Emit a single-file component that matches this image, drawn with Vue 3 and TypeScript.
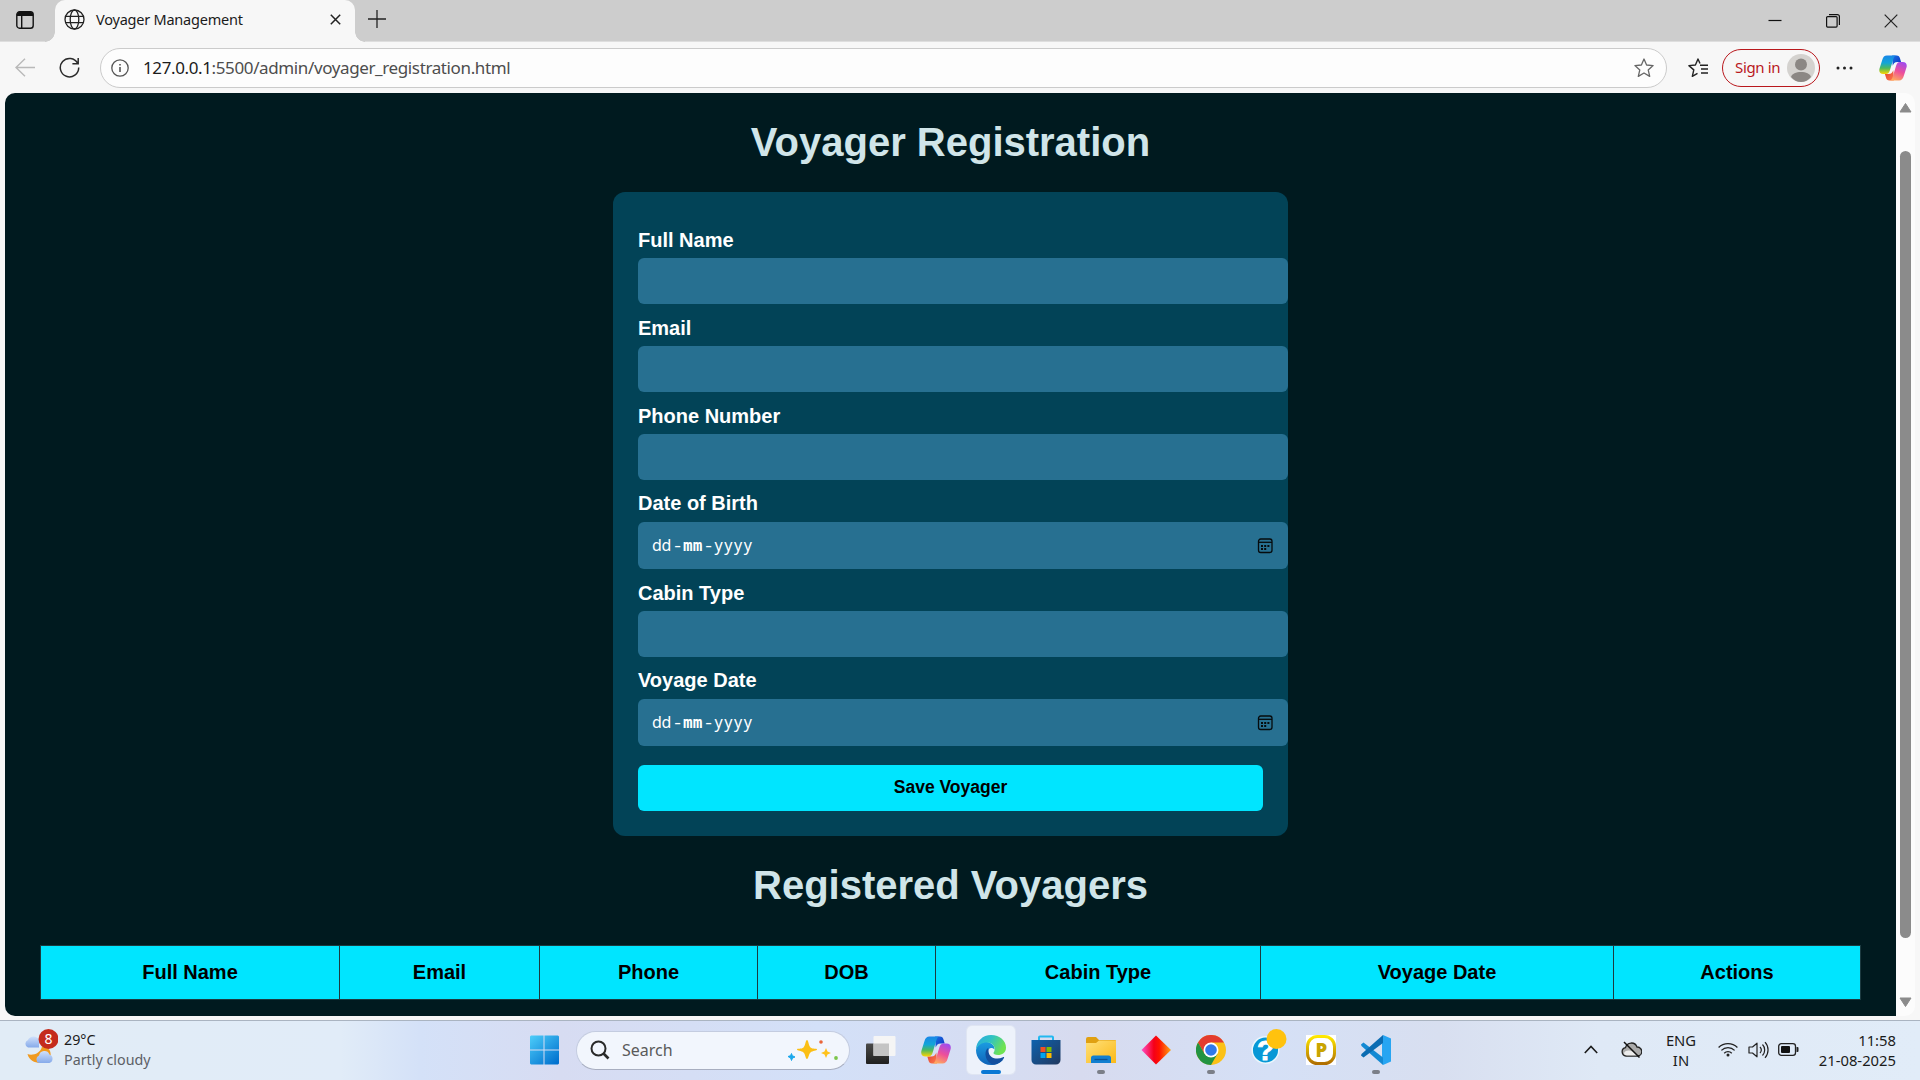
<script setup lang="ts">
interface Field { label: string; date?: boolean }
const fields: Field[] = [
  { label: 'Full Name' },
  { label: 'Email' },
  { label: 'Phone Number' },
  { label: 'Date of Birth', date: true },
  { label: 'Cabin Type' },
  { label: 'Voyage Date', date: true },
]
const columns: { name: string; width: number }[] = [
  { name: 'Full Name', width: 299 },
  { name: 'Email', width: 200 },
  { name: 'Phone', width: 218 },
  { name: 'DOB', width: 178 },
  { name: 'Cabin Type', width: 325 },
  { name: 'Voyage Date', width: 353 },
  { name: 'Actions', width: 247 },
]
</script>

<template>
  <div class="desktop">
    <svg width="0" height="0" class="defs">
      <defs>
        <linearGradient id="cpA" x1="0" y1="0" x2="0" y2="1"><stop offset="0" stop-color="#1a86e8" /><stop offset=".4" stop-color="#12a5d8" /><stop offset=".68" stop-color="#4cb95f" /><stop offset="1" stop-color="#ffd400" /></linearGradient>
        <linearGradient id="cpB" x1=".7" y1="0" x2=".3" y2="1"><stop offset="0" stop-color="#a14bec" /><stop offset=".5" stop-color="#ee4f9a" /><stop offset="1" stop-color="#ffab5c" /></linearGradient>
        <linearGradient id="cpC" x1="0" y1="0" x2="1" y2="1"><stop offset="0" stop-color="#1a72e0" /><stop offset="1" stop-color="#0a2fc4" /></linearGradient>
        <linearGradient id="cpD" x1="0" y1="0" x2="1" y2="1"><stop offset="0" stop-color="#e0402f" /><stop offset="1" stop-color="#ff7a50" /></linearGradient>
        <symbol id="copilot" viewBox="0 0 30 28">
          <path fill="url(#cpC)" d="M14 0.5h5c2 0 3 1.200 3.500 3l1.200 4h-4c-3 0-4 1.500-5 4z" />
          <path fill="url(#cpD)" d="M16 27.500h-5c-2 0-3-1.200-3.500-3l-1.200-4h4c3 0 4-1.500 5-4z" />
          <path fill="url(#cpA)" d="M8.500 0.500H19c-2 0-3 1.500-3.700 4L11.500 17c-.7 2.200-2 3.500-4 3.500H4.500C1 20.500-.5 18 .5 14.500L3.500 5C4.300 2.200 5.800.5 8.500.5z" />
          <path fill="url(#cpB)" d="M21.500 27.500H11c2 0 3-1.500 3.700-4L18.500 11c.7-2.200 2-3.500 4-3.500h3c3.500 0 5 2.500 4 6L26.500 23c-.8 2.800-2.300 4.500-5 4.500z" />
        </symbol>
      </defs>
    </svg>

    <header class="tabbar">
      <div class="workspace">
        <svg width="18" height="18" viewBox="0 0 18 18"><rect x=".8" y=".8" width="16.400" height="16.400" rx="2.800" fill="none" stroke="#111" stroke-width="1.400" /><path d="M1 5V3.500A2.500 2.500 0 0 1 3.500 1h11A2.500 2.500 0 0 1 17 3.500V5zM5 5h1.400v12H5z" fill="#111" /></svg>
      </div>
      <div class="tab">
        <svg width="21" height="21" viewBox="0 0 21 21" fill="none" stroke="#222" stroke-width="1.300"><circle cx="10.500" cy="10.500" r="9.500" /><ellipse cx="10.500" cy="10.500" rx="4.300" ry="9.500" /><path d="M2 7.300h17M2 13.700h17" /></svg>
        <span class="tab-title">Voyager Management</span>
        <svg class="tab-x" width="11" height="11" viewBox="0 0 11 11"><path d="M.8.8l9.400 9.400M10.200.8L.8 10.200" stroke="#222" stroke-width="1.500" /></svg>
      </div>
      <svg class="plus" width="18" height="18" viewBox="0 0 18 18"><path d="M9 0v18M0 9h18" stroke="#222" stroke-width="1.300" /></svg>
      <div class="window-controls">
        <svg width="14" height="14" viewBox="0 0 14 14"><path d="M.5 6.500h13" stroke="#111" stroke-width="1.200" /></svg>
        <svg width="14" height="14" viewBox="0 0 14 14" fill="none" stroke="#111" stroke-width="1.200"><rect x=".6" y="2.600" width="10.500" height="10.500" rx="1" /><path d="M3 .6h8.400a2 2 0 0 1 2 2V11" /></svg>
        <svg width="14" height="14" viewBox="0 0 14 14"><path d="M.7.7l12.600 12.600M13.300.7L.7 13.300" stroke="#222" stroke-width="1.200" /></svg>
      </div>
    </header>

    <div class="toolbar">
      <svg class="back" width="20" height="19" viewBox="0 0 20 19" fill="none" stroke="#b9b9b9" stroke-width="1.400"><path d="M20 9.500H1M10 .8L1 9.500l9 8.700" /></svg>
      <svg class="reload" width="21" height="21" viewBox="0 0 21 21" fill="none" stroke="#2b2b2b" stroke-width="1.500"><path d="M18.700 6.500A9.200 9.200 0 1 0 19.700 10.500M19.200 1v5.800h-5.800" /></svg>
      <div class="address">
        <svg width="18" height="18" viewBox="0 0 18 18" fill="none" stroke="#555" stroke-width="1.300"><circle cx="9" cy="9" r="8.200" /><path d="M9 8v5M9 5v1.600" stroke-width="1.600" /></svg>
        <span class="url"><b>127.0.0.1</b>:5500/admin/voyager_registration.html</span>
        <svg class="star" width="20" height="20" viewBox="0 0 20 20" fill="none" stroke="#666" stroke-width="1.300" stroke-linejoin="round"><path d="M10 1l2.600 6 6.500.6-4.900 4.300 1.500 6.500L10 15l-5.700 3.400 1.500-6.500L.9 7.600 7.400 7z" /></svg>
      </div>
      <svg class="favs" width="20" height="20" viewBox="0 0 20 20" fill="none" stroke="#222" stroke-width="1.400" stroke-linejoin="round"><path d="M12 5.500L10 1 7.400 7 .9 7.600l4.900 4.300-1.500 6.500L9.500 15.300M12 7.200h8M13 11h7M13 15h7" /></svg>
      <div class="signin">
        <span>Sign in</span>
        <svg width="28" height="28" viewBox="0 0 28 28"><circle cx="14" cy="14" r="14" fill="#d4d2cf" /><circle cx="14" cy="10.500" r="6" fill="#8b8784" /><path d="M4 23c1-3.500 5-5 10-5s9 1.500 10 5c-2.500 3-6 5-10 5s-7.500-2-10-5z" fill="#8b8784" /></svg>
      </div>
      <svg class="dots" width="17" height="4" viewBox="0 0 17 4" fill="#222"><circle cx="2" cy="2" r="1.500" /><circle cx="8.500" cy="2" r="1.500" /><circle cx="15" cy="2" r="1.500" /></svg>
      <svg class="copilot-bar" width="28" height="26"><use href="#copilot" /></svg>
    </div>

    <div class="viewport">
      <main class="page">
        <h1>Voyager Registration</h1>
        <form class="form" @submit.prevent>
          <template v-for="f in fields" :key="f.label">
            <label :class="{ date: f.date }">{{ f.label }}</label>
            <div class="input" :class="{ date: f.date }">
              <template v-if="f.date">
                <span class="date-text"><i class="dd">dd</i><i class="sep">-</i><i class="mm">mm</i><i class="sep">-</i><i class="yy">yyyy</i></span>
                <svg width="16" height="16" viewBox="0 0 16 16" fill="none" stroke="#060b0d" stroke-width="1.300"><rect x="1.500" y="1" width="13.500" height="13.500" rx="2.200" /><path d="M1.500 4.300h13.500" /><path d="M4 8h2M7.200 8h2M10.400 8h2M4 11h2M7.200 11h2" stroke-width="2" /></svg>
              </template>
            </div>
          </template>
          <button type="submit">Save Voyager</button>
        </form>
        <h1 class="second">Registered Voyagers</h1>
        <div class="table">
          <div v-for="c in columns" :key="c.name" class="th" :style="{ width: c.width + 'px' }">{{ c.name }}</div>
        </div>
      </main>
      <div class="scrollbar">
        <svg width="13" height="10" viewBox="0 0 13 10"><path d="M6.500.5L12 9H1z" fill="#8b8b8b" stroke="#8b8b8b" stroke-linejoin="round" /></svg>
        <div class="thumb"></div>
        <svg width="13" height="10" viewBox="0 0 13 10"><path d="M6.500 9.500L12 1H1z" fill="#8b8b8b" stroke="#8b8b8b" stroke-linejoin="round" /></svg>
      </div>
    </div>

    <footer class="taskbar">
      <div class="weather">
        <svg class="weather-icon" width="34" height="36" viewBox="0 0 34 36">
          <defs><linearGradient id="cl" x1="0" y1="0" x2="0" y2="1"><stop offset="0" stop-color="#cfe0fb" /><stop offset="1" stop-color="#86aaea" /></linearGradient></defs>
          <path d="M4 18.500a4 4 0 0 1 0-7.500 6 6 0 0 1 11 0v7.500z" fill="url(#cl)" />
          <path d="M3.500 25c4 2 13 0 14.500-7.500 6 0 9.500 4 8.500 9.500-2 9-20 10-23-2z" fill="#f09a20" />
          <path d="M15 34a4 4 0 0 1 0-7.500 5.500 5.500 0 0 1 10.500-1 4.500 4.500 0 0 1 0 8.500z" fill="url(#cl)" />
          <circle cx="24.500" cy="10" r="10" fill="#c42b1c" />
          <text x="24.500" y="15" text-anchor="middle" font-size="14" fill="#fff">8</text>
        </svg>
        <div class="two-line"><span>29°C</span><span class="muted">Partly cloudy</span></div>
      </div>

      <div class="apps">
        <svg class="app" width="30" height="30" viewBox="0 0 30 30">
          <defs><linearGradient id="win" gradientUnits="userSpaceOnUse" x1="0" y1="0" x2="26" y2="30"><stop offset="0" stop-color="#4fd0fb" /><stop offset="1" stop-color="#0070ce" /></linearGradient></defs>
          <path fill="url(#win)" d="M2 .5h12.500v14H1v-13zM15.500.5h13.500l1 1v13H15.500zM1 15.500h13.500v14H2l-1-1zM15.500 15.500H30v13l-1 1H15.500z" />
        </svg>
        <div class="search">
          <svg width="20" height="20" viewBox="0 0 20 20" fill="none" stroke="#2a2a2a" stroke-width="2"><circle cx="8.500" cy="8.500" r="7" /><path d="M13.500 13.500l5 5" stroke-width="2.600" /></svg>
          <span>Search</span>
          <svg class="sparkle" width="52" height="22" viewBox="0 0 52 22">
            <path d="M20 1c1.500 0 1.500 5.500 3.500 7.500S30 9 30 10.500s-4.500 1-6.500 3S21.500 20 20 20s-1.500-4.500-3.500-6.500-6.500-1.500-6.500-3 4.500 0 6.500-2S18.500 1 20 1z" fill="#fbbf16" />
            <path d="M39 9l1.500 3.500L44 14l-3.500 1.500L39 19l-1.500-3.500L34 14l3.500-1.500z" fill="#ffc21c" />
            <path d="M4.500 14.500l.8 2.200L8 18l-2.500 1-1 2.500-.9-2.500L1 17.500l2.500-.8z" fill="#19a7ec" stroke="#19a7ec" />
            <circle cx="34" cy="3" r="1.800" fill="#e9653a" /><circle cx="49" cy="19" r="1.900" fill="#7cc54b" />
          </svg>
        </div>
        <svg class="app" width="30" height="30" viewBox="0 0 30 30">
          <defs><linearGradient id="tv" x1="0" y1="0" x2="0" y2="1"><stop offset="0" stop-color="#4a4a49" /><stop offset="1" stop-color="#20201f" /></linearGradient></defs>
          <rect x="0" y="8.500" width="23" height="20.500" rx="1" fill="url(#tv)" /><rect x="7.500" y="1" width="22" height="20" rx="1" fill="#f5f5f5" /><rect x="7.500" y="8.500" width="15.500" height="12.500" fill="#c4c4c4" />
        </svg>
        <svg class="app" width="30" height="28"><use href="#copilot" /></svg>
        <div class="app-tile active">
          <svg width="30" height="30" viewBox="0 0 30 30">
            <defs>
              <linearGradient id="e1" x1="0" y1="0" x2="1" y2=".4"><stop offset="0" stop-color="#2ba9e2" /><stop offset=".5" stop-color="#2fc2c4" /><stop offset="1" stop-color="#6fe351" /></linearGradient>
              <linearGradient id="e2" x1="0" y1="0" x2="0" y2="1"><stop offset="0" stop-color="#1b9de2" /><stop offset="1" stop-color="#0f62b8" /></linearGradient>
            </defs>
            <path fill="url(#e2)" d="M0 15C1 9 6 6.500 11 7c5 .5 8 4 7.500 7.500-5-4.500-9 2-5 7 3.500 5 10 5 14 2.500C24 29 19 30 15 30 6 30 0 23 0 15z" />
            <path fill="#124f9f" d="M12 13c-5 4-2.500 15 6 16.700C22 29 26 26.500 28 23c.4-.8-.3-1.200-1-.8-6 3-13.500.8-14.300-4.700-.3-2 0-3.200-.7-4.500z" />
            <path fill="url(#e1)" d="M0 15C0 6 7 0 15 0c9 0 15 6 15 12.500C30 18 26 20 22 20c-3 0-5-1-4.500-2.200C20.500 14 18 7.500 11 7.500 6 7.500 1.500 10 0 15z" />
          </svg>
        </div>
        <svg class="app" width="30" height="30" viewBox="0 0 30 30">
          <defs><linearGradient id="st" x1="0" y1="0" x2="1" y2="1"><stop offset="0" stop-color="#0d62ae" /><stop offset="1" stop-color="#22395f" /></linearGradient></defs>
          <path d="M8 6V2.500a1 1 0 0 1 1-1h12a1 1 0 0 1 1 1V6" fill="none" stroke="#22b8f0" stroke-width="2" /><path d="M.5 5h29v20a4.500 4.500 0 0 1-4.500 4.500H5A4.500 4.500 0 0 1 .5 25z" fill="url(#st)" />
          <path d="M9.500 12h5v5h-5z" fill="#f25022" /><path d="M15.500 12h5v5h-5z" fill="#7fba00" /><path d="M9.500 18h5v5h-5z" fill="#00a4ef" /><path d="M15.500 18h5v5h-5z" fill="#ffb900" />
        </svg>
        <div class="app-tile running">
          <svg width="30" height="30" viewBox="0 0 30 30">
            <defs><linearGradient id="fo" x1="0" y1="0" x2="1" y2="1"><stop offset="0" stop-color="#ffe07a" /><stop offset="1" stop-color="#fbb917" /></linearGradient></defs>
            <path d="M0 4a2 2 0 0 1 2-2h8l3 3h16a1 1 0 0 1 1 1v3H0z" fill="#e0a011" /><path d="M0 8h10l3-2.500h17V28H0z" fill="url(#fo)" /><path d="M5 28v-5a2.500 2.500 0 0 1 2.500-2.500h15A2.500 2.500 0 0 1 25 23v5z" fill="#127fd0" /><path d="M8.500 24.500h13" stroke="#0b5295" stroke-width="1.300" />
          </svg>
        </div>
        <svg class="app" width="30" height="30" viewBox="0 0 30 30">
          <defs><linearGradient id="di"><stop offset="0" stop-color="#ff4ec8" /><stop offset=".42" stop-color="#f50018" /><stop offset=".6" stop-color="#ff1200" /><stop offset="1" stop-color="#ffa414" /></linearGradient></defs>
          <path d="M15 .5L30 15 15 29.500.5 15z" fill="url(#di)" />
        </svg>
        <div class="app-tile running">
          <svg width="30" height="30" viewBox="0 0 30 30">
            <circle cx="15" cy="15" r="15" fill="#fbc116" /><path d="M2 7.500A15 15 0 0 1 28 7.500H15l-6.500 11.200z" fill="#e33b2e" /><path d="M2 7.500A15 15 0 0 0 15 30l6.500-11.200H8.500z" fill="#229342" /><circle cx="15" cy="15" r="7.500" fill="#fff" /><circle cx="15" cy="15" r="5.800" fill="#3079ea" />
          </svg>
        </div>
        <svg class="app help" width="36" height="36" viewBox="0 0 36 36">
          <circle cx="14.500" cy="21" r="13.300" fill="#0798d6" stroke="#eaf6fc" stroke-width="1.500" /><text x="14.500" y="31" text-anchor="middle" font-size="28" font-weight="900" fill="#fff" stroke="#fff" stroke-width=".8">?</text><circle cx="25.500" cy="10" r="10" fill="#ffc20e" />
        </svg>
        <svg class="app" width="30" height="30" viewBox="0 0 30 30">
          <defs><linearGradient id="pp" x1="0" y1="0" x2="0" y2="1"><stop offset="0" stop-color="#ffe800" /><stop offset="1" stop-color="#b06f00" /></linearGradient></defs>
          <path d="M0 0h30v30H0z" fill="#fff" /><rect x="1.500" y="1.500" width="27" height="27" rx="10" fill="#fff" stroke="url(#pp)" stroke-width="3" /><text x="15.300" y="21.500" text-anchor="middle" font-size="18.500" font-weight="900" fill="#c9a400">P</text>
        </svg>
        <div class="app-tile running">
          <svg width="30" height="30" viewBox="0 0 30 30">
            <path d="M22 0l8 3.500v23L22 30l-1-9V9z" fill="#27a5f2" /><path d="M0 9.500L2.500 7.500 22 22.500V30L.5 11z" fill="#1389d3" /><path d="M0 20.500l2.500 2L22 8V0L.5 19z" fill="#0b6cb2" />
          </svg>
        </div>
      </div>

      <div class="tray">
        <svg class="chev" width="14" height="9" viewBox="0 0 14 9" fill="none" stroke="#1b1b1b" stroke-width="1.600"><path d="M.8 8L7 1.500 13.200 8" /></svg>
        <svg class="cloud" width="21" height="17" viewBox="0 0 21 17"><path d="M5 15a4.200 4.200 0 0 1-.5-8.300A6 6 0 0 1 16 6a4.500 4.500 0 0 1 .5 9z" fill="#aaa" stroke="#222" stroke-width="1.300" /><path d="M6 14.500c-2 0-3-1-3-2.500 2-3 5-3 9-1l4 3.500z" fill="#ececec" /><path d="M3 1l15.500 15.500" stroke="#111" stroke-width="1.500" /></svg>
        <div class="two-line lang"><span>ENG</span><span>IN</span></div>
        <svg class="wifi" width="20" height="15" viewBox="0 0 20 15" fill="none" stroke="#222" stroke-width="1.300"><path d="M.6 5.500a13.300 13.300 0 0 1 18.800 0M3.400 8.400a9.300 9.300 0 0 1 13.200 0M6.200 11.200a5.400 5.400 0 0 1 7.600 0" /><circle cx="10" cy="13" r="1.500" fill="#222" stroke="none" /></svg>
        <svg class="vol" width="21" height="18" viewBox="0 0 21 18" fill="none" stroke="#222" stroke-width="1.200"><path d="M1 6h3.500L9 2.200v13.600L4.500 12H1zM12 6a4.500 4.500 0 0 1 0 6M14.500 3.500a8 8 0 0 1 0 11M17 1.200a11.500 11.500 0 0 1 0 15.600" stroke-linejoin="round" /></svg>
        <svg class="bat" width="21" height="13" viewBox="0 0 21 13"><rect x=".7" y=".7" width="16.800" height="11.600" rx="2.600" fill="none" stroke="#222" stroke-width="1.300" /><rect x="3" y="3" width="9" height="7" rx="1" fill="#111" /><path d="M18.500 4h1a1 1 0 0 1 1 1v3a1 1 0 0 1-1 1h-1z" fill="#222" /></svg>
        <div class="two-line clock"><span>11:58</span><span>21-08-2025</span></div>
      </div>
    </footer>
  </div>
</template>

<style>
body { margin: 0; overflow: hidden; }
</style>

<style scoped>
* { box-sizing: border-box; }
svg { display: block; flex: none; }
.defs { position: absolute; }
.desktop { width: 1920px; height: 1080px; display: flex; flex-direction: column; background: #f7f7f7; font-family: "Noto Sans", "Open Sans", sans-serif; color: #1b1b1b; overflow: hidden; }

.tabbar { height: 42px; flex: none; background: #cdcdcd; display: flex; align-items: center; border-bottom: 1px solid #dedede; }
.workspace { width: 55px; height: 42px; padding: 11px 0 0 16px; }
.tab { position: relative; width: 300px; height: 42px; background: #f7f7f7; border-radius: 10px 10px 0 0; display: flex; align-items: center; padding: 0 14px 2px 9px; }
.tab::before, .tab::after { content: ""; position: absolute; bottom: 0; width: 10px; height: 10px; }
.tab::before { left: -10px; background: radial-gradient(circle at 0 0, #cdcdcd 9.500px, #f7f7f7 10px); }
.tab::after { right: -10px; background: radial-gradient(circle at 100% 0, #cdcdcd 9.500px, #f7f7f7 10px); }
.tab-title { font-size: 14.500px; letter-spacing: -.22px; margin-left: 11px; padding-bottom: 2px; white-space: nowrap; }
.tab-x { margin-left: auto; }
.plus { margin: 0 0 4px 13px; }
.window-controls { margin-left: auto; display: flex; gap: 44px; padding-right: 22px; }

.toolbar { height: 51px; flex: none; display: flex; align-items: center; background: #f7f7f7; }
.back { margin-left: 15px; }
.reload { margin-left: 24px; }
.address { width: 1567px; height: 40px; margin-left: 20px; border: 1px solid #cbcbcb; border-radius: 20px; background: #fdfdfd; display: flex; align-items: center; padding: 0 12px 0 10px; }
.url { margin-left: 14px; font-size: 17px; letter-spacing: -.38px; color: #4d4d4d; white-space: nowrap; }
.url b { font-weight: 400; color: #1b1b1b; }
.star { margin-left: auto; }
.favs { margin-left: 21px; }
.signin { width: 98px; height: 38px; margin-left: 14px; border: 1px solid #b9181d; border-radius: 19px; display: flex; align-items: center; justify-content: space-between; padding: 0 4px 0 12px; color: #b9181d; font-size: 15px; letter-spacing: -.35px; white-space: nowrap; }
.signin span { padding-bottom: 2px; }
.dots { margin-left: 16px; }
.copilot-bar { margin-left: 26px; }

.viewport { width: 1910px; height: 923px; margin-left: 5px; flex: none; display: flex; border-radius: 10px; overflow: hidden; background: #fcfcfc; }
.page { width: 1891px; background: #001a1f; font-family: "Liberation Sans", Arial, sans-serif; display: flex; flex-direction: column; align-items: center; padding-top: 26px; }
h1 { margin: 0; height: 46px; line-height: 46px; font-size: 40px; font-weight: 700; color: #d0e5e9; white-space: nowrap; }
.form { width: 675px; height: 644px; margin-top: 27px; padding: 35px 25px 25px; border-radius: 12px; background: #024357; display: flex; flex-direction: column; }
label { display: block; height: 31px; line-height: 26px; flex: none; font-size: 20px; font-weight: 700; color: #fff; }
label.date { line-height: 24px; }
.input { width: 650px; height: 46px; flex: none; margin-bottom: 11px; border-radius: 6px; background: #277091; display: flex; align-items: center; justify-content: space-between; padding: 0 15px 0 14px; color: #fff; }
.input.date { height: 47px; }
.date-text { display: flex; font: 16px/20px "Noto Sans", sans-serif; }
.date-text i { font-style: normal; display: block; white-space: nowrap; }
.date-text .dd { width: 20px; letter-spacing: -.4px; }
.date-text .sep { width: 11px; text-align: center; transform: scaleX(1.300); }
.date-text .mm { width: 20px; font: 700 16px/21px "DejaVu Sans Mono", monospace; }
.date-text .yy { letter-spacing: 1.600px; margin-left: .5px; }
button { height: 46px; flex: none; margin: 8px 0 0; border: 0; border-radius: 6px; background: #00e5ff; color: #000; font: 700 17.500px "Liberation Sans", Arial, sans-serif; padding: 0 0 2px; }
.second { margin-top: 26px; }
.table { width: 1821px; height: 55px; margin-top: 37px; display: flex; border: 1px solid #1c3a40; border-right: 0; background: #00e5ff; }
.th { flex: none; border-right: 1px solid #1c3a40; color: #000; font-size: 20px; font-weight: 700; line-height: 52px; text-align: center; }
.scrollbar { width: 19px; display: flex; flex-direction: column; align-items: center; padding: 10px 0 9px; }
.thumb { width: 11px; height: 787px; margin: 38px 0 auto; border-radius: 6px; background: #8b8b8b; }

.taskbar { height: 60px; margin-top: 4px; border-top: 1px solid #aab4c1; display: flex; align-items: center; position: relative; background: linear-gradient(90deg, #e1ecf6 0, #e1ecf8 340px, #d4e1f8 420px, #d7dcf2 560px, #d3e0f8 820px, #d7dbef 1080px, #d5e0f6 1270px, #d8dff0 1440px, #dfe9f6 1600px, #e1ecf8 100%); }
.weather { width: 529px; display: flex; align-items: center; padding: 0 0 2px 24px; }
.weather-icon { margin-bottom: 6px; }
.two-line { display: flex; flex-direction: column; font-size: 14.300px; line-height: 20px; white-space: nowrap; }
.weather .two-line { margin-left: 6px; }
.muted { color: #5c6066; }
.apps { display: flex; align-items: center; padding-bottom: 1px; }
.search { width: 274px; height: 39px; margin: 0 16px 0 17px; display: flex; align-items: center; padding: 0 10px 0 13px; border: 1px solid #c4cce0; border-bottom-color: #a8aec0; border-radius: 20px; background: #f2f6fd; font-size: 16px; color: #5a5a5a; }
.search span { margin-left: 12px; }
.sparkle { margin-left: auto; }
.app { margin-right: 25px; }
.apps > .app:first-child { margin-right: 0; }
.app-tile { position: relative; width: 48px; height: 48px; margin: 0 16px 0 -9px; display: flex; align-items: center; justify-content: center; border-radius: 5px; }
.active { background: #edf2fb; box-shadow: 0 0 0 1px #dfe5f2; }
.active::after, .running::after { content: ""; position: absolute; bottom: 0; left: 20px; width: 8px; height: 4px; border-radius: 2px; background: #7b7f88; }
.active::after { left: 14px; width: 20px; background: #0a78d4; }
.help { margin: -6px 19px 0 0; font-family: "Liberation Sans", sans-serif; }
.tray { margin-left: auto; display: flex; align-items: center; padding: 0 24px 2px 0; }
.tray .two-line { font-size: 14.800px; }
.cloud { margin-left: 23px; }
.chev { margin-right: 0; }
.lang { width: 36px; margin-left: 21px; align-items: center; }
.wifi { margin-left: 19px; }
.vol { margin-left: 10px; }
.bat { margin-left: 9px; }
.clock { width: 82px; margin-left: 15px; align-items: flex-end; }
</style>
